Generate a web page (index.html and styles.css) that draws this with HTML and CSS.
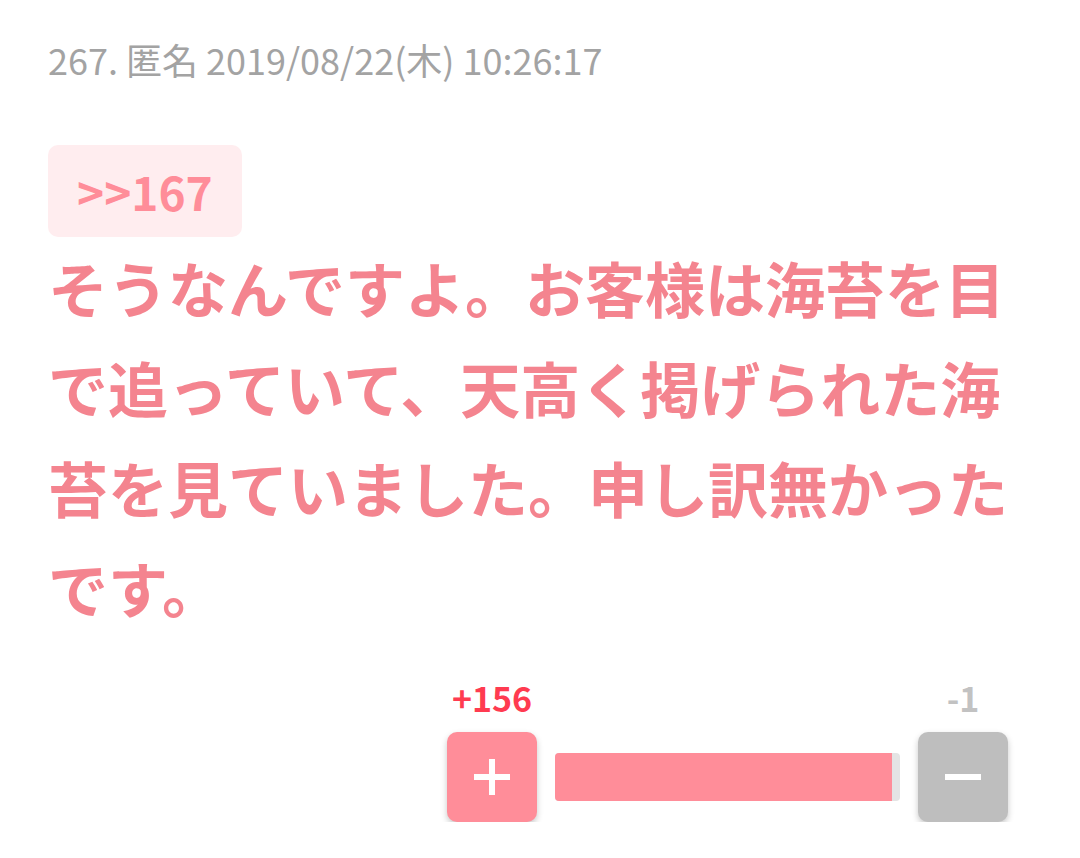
FILE: index.html
```html
<!DOCTYPE html>
<html lang="ja">
<head>
<meta charset="utf-8">
<title>267</title>
<link rel="stylesheet" href="styles.css">
</head>
<body>
<article class="post">
  <header class="post-meta">267. 匿名 2019/08/22(木) 10:26:17</header>
  <div class="reply-row"><span class="reply-anchor">&gt;&gt;167</span></div>
  <p class="post-body">そうなんですよ。お客様は海苔を目で追っていて、天高く掲げられた海苔を見ていました。申し訳無かったです。</p>
  <div class="vote">
    <div class="vote-col">
      <span class="vote-count vote-count-plus">+156</span>
      <button class="vote-btn vote-btn-plus" aria-label="plus">
        <svg width="36" height="36" viewBox="0 0 36 36"><rect x="15" y="0" width="6" height="36" fill="#fff"/><rect x="0" y="15" width="36" height="6" fill="#fff"/></svg>
      </button>
    </div>
    <div class="vote-bar"><div class="vote-bar-fill" style="width:97.7%"></div></div>
    <div class="vote-col">
      <span class="vote-count vote-count-minus">-1</span>
      <button class="vote-btn vote-btn-minus" aria-label="minus">
        <svg width="36" height="36" viewBox="0 0 36 36"><rect x="0" y="15" width="36" height="6" fill="#fff"/></svg>
      </button>
    </div>
  </div>
</article>
</body>
</html>
```
FILE: styles.css
```css
html, body {
  margin: 0;
  padding: 0;
  background: #ffffff;
}
body {
  font-family: "Noto Sans CJK JP", "Noto Sans", sans-serif;
}
.post {
  padding: 35px 70px 0 48px;
}
.post-meta {
  font-size: 36px;
  line-height: 48px;
  color: #a3a3a3;
  font-weight: 400;
}
.reply-row {
  margin-top: 62px;
  display: flex;
}
.reply-anchor {
  display: block;
  background: #ffedef;
  color: #ff8d99;
  font-weight: 700;
  font-size: 46px;
  line-height: 92px;
  padding: 0 29px;
  border-radius: 10px;
}
.post-body {
  margin: 0;
  font-size: 60px;
  line-height: 100px;
  font-weight: 700;
  color: #f4848f;
}
.vote {
  margin-top: 39px;
  margin-right: 2px;
  display: flex;
  justify-content: flex-end;
  align-items: flex-end;
  gap: 18px;
}
.vote-col {
  display: flex;
  flex-direction: column;
  align-items: center;
  gap: 12px;
}
.vote-count {
  font-size: 34px;
  line-height: 44px;
  font-weight: 700;
}
.vote-count-plus { color: #ff3b50; }
.vote-count-minus { color: #c2c2c2; }
.vote-btn {
  width: 90px;
  height: 90px;
  border: none;
  border-radius: 10px;
  padding: 0;
  display: flex;
  align-items: center;
  justify-content: center;
  box-shadow: 0 3px 6px rgba(0, 0, 0, 0.22);
}
.vote-btn-plus { background: #ff8d99; }
.vote-btn-minus { background: #bebebe; }
.vote-bar {
  width: 345px;
  height: 48px;
  margin-bottom: 21px;
  background: #e4e4e4;
  border-radius: 4px;
  overflow: hidden;
}
.vote-bar-fill {
  height: 100%;
  background: #ff8d99;
}
```
